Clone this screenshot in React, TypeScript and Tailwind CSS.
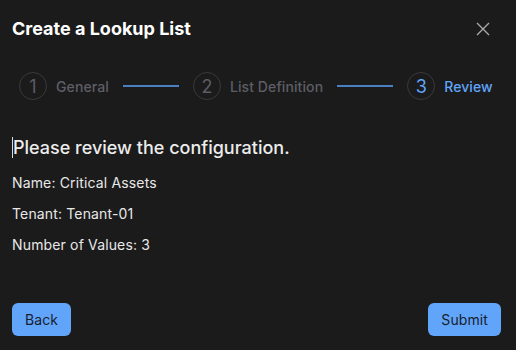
import React from "react";

const steps = [
  { n: 1, label: "General" },
  { n: 2, label: "List Definition" },
  { n: 3, label: "Review" },
];

export default function App() {
  const current = 3;

  return (
    <div
      className="w-[516px] h-[350px] bg-[#1b1b1b] text-[#ececec] flex flex-col"
      style={{ fontFamily: "Inter, 'Noto Sans', sans-serif" }}
    >
      {/* HEADER */}
      <div className="flex items-center justify-between pl-3 pr-[26px] pt-[17px] h-[40px]">
        <h1 className="text-[18px] font-bold text-white">Create a Lookup List</h1>
        <svg width="14" height="14" viewBox="0 0 14 14" className="text-[#a8a8ad]">
          <path d="M1 1L13 13M13 1L1 13" stroke="currentColor" strokeWidth="1.4" />
        </svg>
      </div>

      {/* STEPPER */}
      <div className="flex items-center pl-[19px] mt-[31px] h-[30px]">
        {steps.map((s, i) => {
          const active = s.n === current;
          return (
            <React.Fragment key={s.n}>
              <div className="flex items-center">
                <div
                  className={`w-[28px] h-[28px] rounded-full border border-[#3a3a3d] flex items-center justify-center text-[18px] ${
                    active ? "text-[#60a5fa]" : "text-[#5c5c63]"
                  }`}
                >
                  {s.n}
                </div>
                <span
                  className={`ml-[9px] text-[14px] font-medium tracking-[0.1px] ${
                    active ? "text-[#60a5fa]" : "text-[#5e5e66]"
                  }`}
                >
                  {s.label}
                </span>
              </div>
              {i < steps.length - 1 && (
                <div className="w-[56px] h-[2px] bg-[#4a7fc4] mx-[14px]" />
              )}
            </React.Fragment>
          );
        })}
      </div>

      {/* CONTENT */}
      <div className="px-3 mt-[35px]">
        <div className="flex items-center h-[22px]">
          <span className="w-px h-[21px] bg-[#dcdcdc]" />
          <h2 className="text-[18px] font-medium text-[#ececec]">Please review the configuration.</h2>
        </div>
        <div className="mt-[15px] flex flex-col gap-[11px] text-[14px] tracking-[0.15px] text-[#e8e8e8]">
          <p className="h-[20px] leading-[20px]">Name: Critical Assets</p>
          <p className="h-[20px] leading-[20px]">Tenant: Tenant-01</p>
          <p className="h-[20px] leading-[20px]">Number of Values: 3</p>
        </div>
      </div>

      {/* ACTIONS */}
      <div className="mt-auto mb-[14px] px-3 pr-[15px] flex justify-between">
        <button className="h-[33px] px-[13px] rounded-[6px] bg-[#60a5fa] text-[#18202e] text-[14px] tracking-[0.1px]">
          Back
        </button>
        <button className="h-[33px] px-[13px] rounded-[6px] bg-[#60a5fa] text-[#18202e] text-[14px] tracking-[0.1px]">
          Submit
        </button>
      </div>
    </div>
  );
}
